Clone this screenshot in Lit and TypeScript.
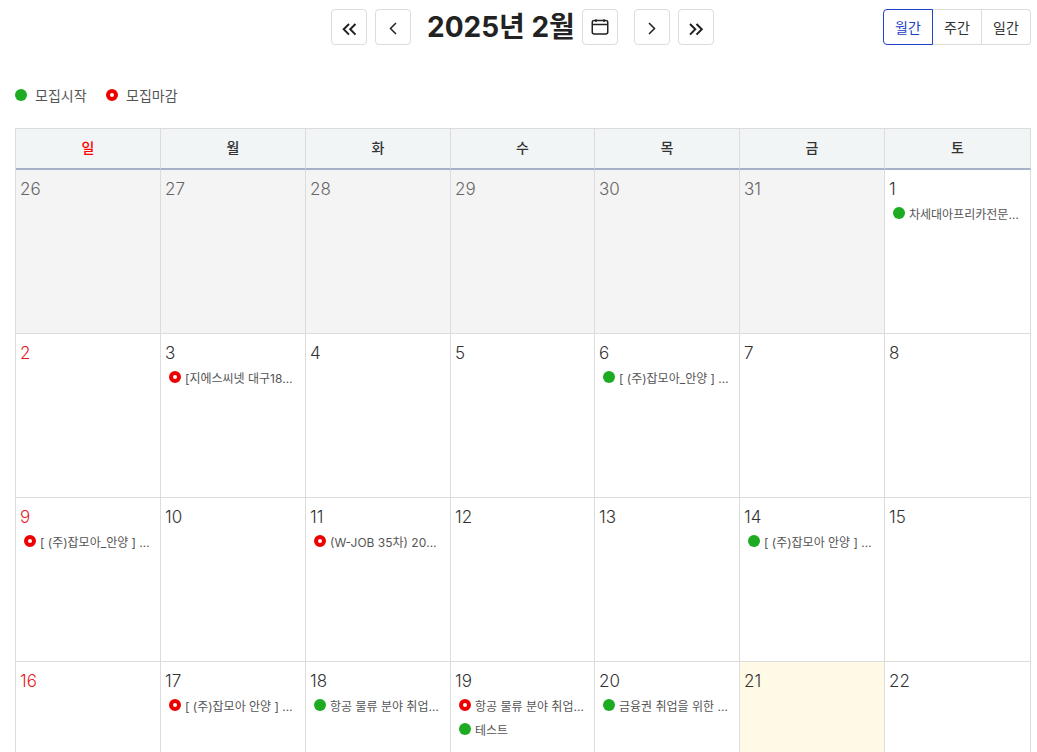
import { LitElement, html, css, svg } from 'lit';
import { customElement, state } from 'lit/decorators.js';

type Kind = 'start' | 'end';
interface CalEvent { kind: Kind; title: string; }
interface Day { n: number; other?: boolean; today?: boolean; events?: CalEvent[]; }

const WEEK = ['일', '월', '화', '수', '목', '금', '토'];

const DAYS: Day[] = [
    { n: 26, other: true }, { n: 27, other: true }, { n: 28, other: true }, { n: 29, other: true },
    { n: 30, other: true }, { n: 31, other: true },
    { n: 1, events: [{ kind: 'start', title: '차세대아프리카전문가 양성과정' }] },
    { n: 2 },
    { n: 3, events: [{ kind: 'end', title: '[지에스씨넷 대구18기] 취업 연계 과정' }] },
    { n: 4 }, { n: 5 },
    { n: 6, events: [{ kind: 'start', title: '[ (주)잡모아_안양 ] 취업 연계 과정 모집' }] },
    { n: 7 }, { n: 8 },
    { n: 9, events: [{ kind: 'end', title: '[ (주)잡모아_안양 ] 취업 연계 과정 모집' }] },
    { n: 10 },
    { n: 11, events: [{ kind: 'end', title: '(W-JOB 35차) 2025 취업 연계 과정 모집' }] },
    { n: 12 }, { n: 13 },
    { n: 14, events: [{ kind: 'start', title: '[ (주)잡모아 안양 ] 취업 연계 과정 모집' }] },
    { n: 15 }, { n: 16 },
    { n: 17, events: [{ kind: 'end', title: '[ (주)잡모아 안양 ] 취업 연계 과정 모집' }] },
    { n: 18, events: [{ kind: 'start', title: '항공 물류 분야 취업 연계 과정' }] },
    { n: 19, events: [{ kind: 'end', title: '항공 물류 분야 취업 연계 과정' }, { kind: 'start', title: '테스트' }] },
    { n: 20, events: [{ kind: 'start', title: '금융권 취업을 위한 실무 양성 과정' }] },
    { n: 21, today: true },
    { n: 22 },
];

const ICONS = {
    first: svg`<path stroke-width="2" d="M12 9l-5.3 5.3 5.3 5.3M18.5 9l-5.3 5.3 5.3 5.3"/>`,
    prev: svg`<path d="M15 8l-5.5 5.5L15 19"/>`,
    next: svg`<path d="M9 8l5.5 5.5L9 19"/>`,
    last: svg`<path stroke-width="2" d="M6 9l5.3 5.3L6 19.6M12.5 9l5.3 5.3-5.3 5.3"/>`,
    calendar: svg`<rect x="4.25" y="5.5" width="15.5" height="13.5" rx="2"/><path d="M4.25 9.5h15.5M8 4.3V7M16 4.3V7"/>`,
};

@customElement('app-root')
export class AppRoot extends LitElement {
    static override styles = css`
        :host {
            display: block;
            height: 100vh;
            overflow: hidden;
            background: #fff;
            color: #333;
            font-family: Inter, "Noto Sans CJK KR", sans-serif;
        }

        .toolbar {
            display: flex;
            align-items: center;
            justify-content: space-between;
            padding: 9px 6px 0 331px;
        }

        .nav {
            display: flex;
            align-items: center;
        }

        .icon-btn {
            width: 36px;
            height: 36px;
            padding: 0;
            display: flex;
            align-items: center;
            justify-content: center;
            background: #fff;
            border: 1px solid #dcdcdc;
            border-radius: 4px;
            color: #222;
        }

        .icon-btn svg {
            fill: none;
            stroke: currentColor;
            stroke-width: 1.5;
            width: 24px;
            height: 24px;
        }

        .nav .gap-s { margin-left: 8px; }
        .nav .gap-m { margin-left: 16px; }

        .title {
            margin: 0 7px 0 16px;
            font-size: 28px;
            font-weight: 700;
            line-height: 36px;
            color: #222;
        }

        .views {
            display: flex;
        }

        .views button {
            height: 36px;
            padding: 0;
            width: 49px;
            background: #fff;
            border: 1px solid #dcdcdc;
            border-left: none;
            font: 400 14px Inter, "Noto Sans CJK KR", sans-serif;
            color: #333;
        }

        .views button:first-child {
            width: 50px;
            border: 1px solid #1d42c8;
            border-radius: 4px 0 0 4px;
            color: #1d42c8;
        }

        .views button:last-child { border-radius: 0 4px 4px 0; }

        .legend {
            display: flex;
            align-items: center;
            gap: 19.5px;
            padding: 40px 15px 0;
            height: 20px;
            font-size: 14px;
            color: #555;
        }

        .legend span {
            display: flex;
            align-items: center;
            gap: 8px;
        }

        .dot {
            flex: none;
            box-sizing: border-box;
            width: 12px;
            height: 12px;
            border-radius: 50%;
            background: #1cab21;
        }

        .dot.end {
            background: #fff;
            border: 4px solid #ec0000;
        }

        .calendar {
            margin: 23px 6px 0 15px;
            border-left: 1px solid #dcdcdc;
            display: grid;
            grid-template-columns: 145px 145px 145px 144px 145px 145px 146px;
        }

        .head {
            height: 39px;
            line-height: 38px;
            text-align: center;
            background: #f1f5f6;
            border-top: 1px solid #dcdcdc;
            border-right: 1px solid #dcdcdc;
            border-bottom: 2px solid #a5b1c6;
            font-size: 14px;
            font-weight: 500;
            color: #333;
        }

        .head.sun { color: #f00; }

        .cell {
            box-sizing: border-box;
            min-width: 0;
            height: 164px;
            padding: 9px 3px 0;
            border-right: 1px solid #dcdcdc;
            border-bottom: 1px solid #dcdcdc;
        }

        .cell.sun .num { color: #e8161c; }
        .cell.other { background: #f4f4f4; }
        .cell.other .num { color: #666; }
        .cell.today { background: #fffae6; }

        .num {
            padding-left: 1px;
            font-size: 17px;
            font-weight: 300;
            line-height: 20px;
            color: #333;
        }

        .event {
            display: flex;
            align-items: center;
            gap: 4px;
            height: 24px;
            margin-top: 2px;
            padding-left: 5px;
            padding-right: 6px;
            font-size: 12px;
            color: #555;
        }

        .event + .event { margin-top: 0; }

        .event .text {
            min-width: 0;
            overflow: hidden;
            white-space: nowrap;
            text-overflow: ellipsis;
        }
    `;

    @state() private days = DAYS;

    private iconBtn(name: keyof typeof ICONS, label: string, cls = '') {
        return html`
            <button class="icon-btn ${cls}" aria-label=${label}>
                <svg viewBox="0 0 24 24">${ICONS[name]}</svg>
            </button>
        `;
    }

    private renderDay(day: Day, i: number) {
        const classes = [
            'cell',
            day.other ? 'other' : '',
            day.today ? 'today' : '',
            i % 7 === 0 ? 'sun' : '',
        ].join(' ');
        return html`
            <div class=${classes}>
                <div class="num">${day.n}</div>
                ${(day.events ?? []).map(e => html`
                    <div class="event">
                        <i class="dot ${e.kind}"></i>
                        <span class="text">${e.title}</span>
                    </div>
                `)}
            </div>
        `;
    }

    override render() {
        return html`
            <div class="toolbar">
                <div class="nav">
                    ${this.iconBtn('first', '이전 해')}
                    ${this.iconBtn('prev', '이전 달', 'gap-s')}
                    <h1 class="title">2025년 2월</h1>
                    ${this.iconBtn('calendar', '달력')}
                    ${this.iconBtn('next', '다음 달', 'gap-m')}
                    ${this.iconBtn('last', '다음 해', 'gap-s')}
                </div>
                <div class="views">
                    <button>월간</button>
                    <button>주간</button>
                    <button>일간</button>
                </div>
            </div>
            <div class="legend">
                <span><i class="dot start"></i>모집시작</span>
                <span><i class="dot end"></i>모집마감</span>
            </div>
            <div class="calendar">
                ${WEEK.map((d, i) => html`<div class="head ${i === 0 ? 'sun' : ''}">${d}</div>`)}
                ${this.days.map((d, i) => this.renderDay(d, i))}
            </div>
        `;
    }
}
